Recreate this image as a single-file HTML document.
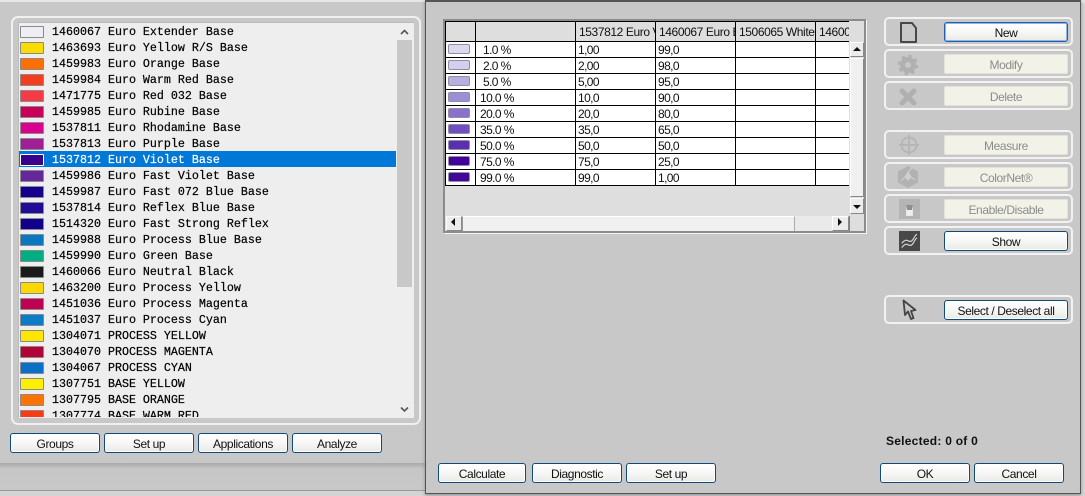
<!DOCTYPE html>
<html><head><meta charset="utf-8"><style>
html,body{margin:0;padding:0;width:1085px;height:496px;overflow:hidden;background:#d4d4d4}
body{position:relative;font-family:"Liberation Sans",sans-serif;font-size:12px;color:#111}
div,svg,span{position:absolute;box-sizing:border-box}
.r{left:19px;width:377px;height:16px;font:11.67px/18px "Liberation Mono",monospace;color:#000;white-space:pre;-webkit-text-stroke:.2px #000}
.r span{left:33px;top:0}
.r i{position:absolute;left:1px;top:3px;width:22px;height:10px;border:1px solid #8a8a8a;border-radius:1px}
.btn{height:20px;border:1px solid #0f4a7c;border-radius:3px;background:linear-gradient(#fff,#f8f8f8 45%,#e9e9e4);text-align:center;line-height:20px;color:#111;font-size:12px;letter-spacing:-.4px;white-space:nowrap;box-shadow:inset 0 0 0 1px #fff}
.dis{border:1px solid #e2e2d8;border-radius:2px;background:#f2f2e8;color:#8c8c8c;box-shadow:none}
.grp{left:884px;width:189px;height:29px;border:2px solid #f2f2f2;border-radius:5px}
.c{font-size:12px;line-height:18px;white-space:nowrap;color:#111;letter-spacing:-.6px}
.hl{left:446px;width:403px;height:1px;background:#000}
.vl{top:22px;width:1px;height:164px;background:#000}
.sw{left:448px;width:22px;height:10px;border:1px solid #8f8f9f;border-radius:2px}
.h{top:24px;height:17px;line-height:17px;overflow:hidden;white-space:nowrap;font-size:12px;color:#111;letter-spacing:-.4px}
.sb{background:#ececec;border-top:1px solid #fff;border-left:1px solid #fff;border-right:1px solid #888;border-bottom:1px solid #888}
</style></head><body>

<div style="left:0;top:0;width:1085px;height:3px;background:#e6e6e6"></div>
<div style="left:0;top:463px;width:425px;height:27px;background:linear-gradient(#a9a9a9,#c6c6c6 6px,#c8c8c8)"></div>
<div style="left:0;top:490px;width:425px;height:1px;background:#9a9a9a"></div>
<div style="left:0;top:2px;width:425px;height:461px;background:#c8c8c8"></div>

<div style="left:11px;top:16px;width:410px;height:409px;border:2px solid #f0f0f0;border-radius:7px"></div>
<div style="left:18px;top:22px;width:396px;height:396px;background:#eeeeee;border-top:1px solid #bbb;border-left:1px solid #bbb"></div>

<div class="r" style="top:23px"><i style="background:#eeeef4"></i><span>1460067 Euro Extender Base</span></div>
<div class="r" style="top:39px"><i style="background:#fbdc00"></i><span>1463693 Euro Yellow R/S Base</span></div>
<div class="r" style="top:55px"><i style="background:#ff6e00"></i><span>1459983 Euro Orange Base</span></div>
<div class="r" style="top:71px"><i style="background:#f43e1e"></i><span>1459984 Euro Warm Red Base</span></div>
<div class="r" style="top:87px"><i style="background:#f83a44"></i><span>1471775 Euro Red 032 Base</span></div>
<div class="r" style="top:103px"><i style="background:#c80058"></i><span>1459985 Euro Rubine Base</span></div>
<div class="r" style="top:119px"><i style="background:#dc0090"></i><span>1537811 Euro Rhodamine Base</span></div>
<div class="r" style="top:135px"><i style="background:#a01e96"></i><span>1537813 Euro Purple Base</span></div>
<div class="r" style="top:151px;background:#0078d7;color:#fff;-webkit-text-stroke:.2px #fff"><i style="background:#38008c;border-color:#fff"></i><span>1537812 Euro Violet Base</span></div>
<div class="r" style="top:167px"><i style="background:#64289c"></i><span>1459986 Euro Fast Violet Base</span></div>
<div class="r" style="top:183px"><i style="background:#14008c"></i><span>1459987 Euro Fast 072 Blue Base</span></div>
<div class="r" style="top:199px"><i style="background:#200c98"></i><span>1537814 Euro Reflex Blue Base</span></div>
<div class="r" style="top:215px"><i style="background:#10008c"></i><span>1514320 Euro Fast Strong Reflex</span></div>
<div class="r" style="top:231px"><i style="background:#0a78c0"></i><span>1459988 Euro Process Blue Base</span></div>
<div class="r" style="top:247px"><i style="background:#00ae84"></i><span>1459990 Euro Green Base</span></div>
<div class="r" style="top:263px"><i style="background:#1a1a1a"></i><span>1460066 Euro Neutral Black</span></div>
<div class="r" style="top:279px"><i style="background:#fcd800"></i><span>1463200 Euro Process Yellow</span></div>
<div class="r" style="top:295px"><i style="background:#c00050"></i><span>1451036 Euro Process Magenta</span></div>
<div class="r" style="top:311px"><i style="background:#0a7cc8"></i><span>1451037 Euro Process Cyan</span></div>
<div class="r" style="top:327px"><i style="background:#ffe600"></i><span>1304071 PROCESS YELLOW</span></div>
<div class="r" style="top:343px"><i style="background:#b00434"></i><span>1304070 PROCESS MAGENTA</span></div>
<div class="r" style="top:359px"><i style="background:#0870c8"></i><span>1304067 PROCESS CYAN</span></div>
<div class="r" style="top:375px"><i style="background:#fff000"></i><span>1307751 BASE YELLOW</span></div>
<div class="r" style="top:391px"><i style="background:#ff7400"></i><span>1307795 BASE ORANGE</span></div>
<div style="left:19px;top:407px;width:377px;height:10px;overflow:hidden"><div class="r" style="left:0;top:0"><i style="background:#fc3a14"></i><span>1307774 BASE WARM RED</span></div></div>

<div style="left:397px;top:23px;width:15px;height:394px;background:#eeeeee"></div>
<div style="left:397px;top:40px;width:15px;height:247px;background:#c8c8c8"></div>
<svg style="left:397px;top:23px" width="15" height="394"><path d="M4 11l3.500-3.500 3.500 3.500M4 384.500l3.500 3.500 3.500-3.500" fill="none" stroke="#555" stroke-width="1.600"/></svg>

<div class="btn" style="left:10px;top:433px;width:90px">Groups</div>
<div class="btn" style="left:104px;top:433px;width:90px">Set up</div>
<div class="btn" style="left:198px;top:433px;width:90px">Applications</div>
<div class="btn" style="left:292px;top:433px;width:90px">Analyze</div>

<!-- right window -->
<div style="left:425px;top:0;width:656px;height:494px;background:#c8c8c8;border:1px solid #555;border-top:2px solid #555;box-shadow:0 1px 3px #888"></div>

<!-- table -->
<div style="left:443px;top:19px;width:423px;height:214px;background:#dedede;border:2px solid #8c8c8c;box-shadow:1px 1px 0 #f4f4f4"></div>
<div style="left:445px;top:21px;width:404px;height:1px;background:#000"></div>
<div style="left:446px;top:42px;width:403px;height:144px;background:#fff"></div>
<div class="hl" style="top:41px"></div><div class="hl" style="top:57px"></div><div class="hl" style="top:73px"></div><div class="hl" style="top:89px"></div><div class="hl" style="top:105px"></div><div class="hl" style="top:121px"></div><div class="hl" style="top:137px"></div><div class="hl" style="top:153px"></div><div class="hl" style="top:169px"></div><div class="hl" style="top:185px"></div>
<div class="vl" style="left:445px"></div><div class="vl" style="left:475px"></div><div class="vl" style="left:575px"></div><div class="vl" style="left:655px"></div><div class="vl" style="left:735px"></div><div class="vl" style="left:815px"></div>

<div class="h" style="left:579px;width:76px">1537812 Euro V</div>
<div class="h" style="left:659px;width:76px">1460067 Euro E</div>
<div class="h" style="left:739px;width:76px">1506065 White</div>
<div class="h" style="left:819px;width:30px">14600</div>

<div class="sw" style="top:44px;background:#dcd8f0"></div>
<div class="sw" style="top:60px;background:#d4cfec"></div>
<div class="sw" style="top:76px;background:#b8aee0"></div>
<div class="sw" style="top:92px;background:#9c8ed8"></div>
<div class="sw" style="top:108px;background:#8a72cc"></div>
<div class="sw" style="top:124px;background:#7050c0"></div>
<div class="sw" style="top:140px;background:#5a30b0"></div>
<div class="sw" style="top:156px;background:#44009c"></div>
<div class="sw" style="top:172px;background:#420898"></div>

<div class="c" style="left:483px;top:41px">1.0 %</div><div class="c" style="left:578px;top:41px">1,00</div><div class="c" style="left:658px;top:41px">99,0</div>
<div class="c" style="left:483px;top:57px">2.0 %</div><div class="c" style="left:578px;top:57px">2,00</div><div class="c" style="left:658px;top:57px">98,0</div>
<div class="c" style="left:483px;top:73px">5.0 %</div><div class="c" style="left:578px;top:73px">5,00</div><div class="c" style="left:658px;top:73px">95,0</div>
<div class="c" style="left:480px;top:89px">10.0 %</div><div class="c" style="left:578px;top:89px">10,0</div><div class="c" style="left:658px;top:89px">90,0</div>
<div class="c" style="left:480px;top:105px">20.0 %</div><div class="c" style="left:578px;top:105px">20,0</div><div class="c" style="left:658px;top:105px">80,0</div>
<div class="c" style="left:480px;top:121px">35.0 %</div><div class="c" style="left:578px;top:121px">35,0</div><div class="c" style="left:658px;top:121px">65,0</div>
<div class="c" style="left:480px;top:137px">50.0 %</div><div class="c" style="left:578px;top:137px">50,0</div><div class="c" style="left:658px;top:137px">50,0</div>
<div class="c" style="left:480px;top:153px">75.0 %</div><div class="c" style="left:578px;top:153px">75,0</div><div class="c" style="left:658px;top:153px">25,0</div>
<div class="c" style="left:480px;top:169px">99.0 %</div><div class="c" style="left:578px;top:169px">99,0</div><div class="c" style="left:658px;top:169px">1,00</div>

<!-- scrollbars -->
<div class="sb" style="left:850px;top:42px;width:14px;height:15px"></div>
<div class="sb" style="left:850px;top:58px;width:14px;height:139px;background:#f0f0f0"></div>
<div class="sb" style="left:850px;top:198px;width:14px;height:16px"></div>
<div class="sb" style="left:446px;top:216px;width:16px;height:15px"></div>
<div style="left:462px;top:216px;width:333px;height:15px;background:#f0f0f0;border-top:1px solid #fff;border-left:1px solid #999;border-right:1px solid #aaa"></div>
<div style="left:795px;top:216px;width:37px;height:15px;background:#eaeaea"></div>
<div class="sb" style="left:832px;top:216px;width:17px;height:15px"></div>
<div style="left:849px;top:216px;width:1px;height:15px;background:#808080"></div>
<svg style="left:443px;top:19px" width="423" height="214"><path d="M410 32h8l-4-4zM410 186h8l-4 4zM12 199v8l-4-4zM395 199v8l4-4z" fill="#111"/></svg>

<!-- right groups -->
<div class="grp" style="top:17px"></div>
<div class="grp" style="top:49px"></div>
<div class="grp" style="top:81px"></div>
<div class="grp" style="top:130px"></div>
<div class="grp" style="top:162px"></div>
<div class="grp" style="top:194px"></div>
<div class="grp" style="top:226px"></div>
<div class="grp" style="top:295px"></div>

<div class="btn" style="left:944px;top:22px;width:124px;border-color:#1f5fb0;box-shadow:inset 0 0 0 1px #8fb4e8">New</div>
<div class="btn dis" style="left:944px;top:54px;width:124px">Modify</div>
<div class="btn dis" style="left:944px;top:86px;width:124px">Delete</div>
<div class="btn dis" style="left:944px;top:135px;width:124px">Measure</div>
<div class="btn dis" style="left:944px;top:167px;width:124px">ColorNet®</div>
<div class="btn dis" style="left:944px;top:199px;width:124px">Enable/Disable</div>
<div class="btn" style="left:944px;top:231px;width:124px">Show</div>
<div class="btn" style="left:944px;top:300px;width:124px">Select / Deselect all</div>

<!-- icons -->
<svg style="left:895px;top:18px" width="30" height="28"><path d="M6 5h11l4 5v14h-15z" fill="none" stroke="#484848" stroke-width="2" stroke-linejoin="round"/></svg>
<svg style="left:895px;top:50px" width="28" height="28"><circle cx="13" cy="15" r="5.500" fill="none" stroke="#b0b0b0" stroke-width="5"/><circle cx="13" cy="15" r="8.500" fill="none" stroke="#b0b0b0" stroke-width="3.500" stroke-dasharray="3.300 3.375"/></svg>
<svg style="left:895px;top:82px" width="28" height="28"><path d="M7 9l12 12M19 9L7 21" stroke="#b0b0b0" stroke-width="5" stroke-linecap="round"/></svg>
<svg style="left:895px;top:131px" width="28" height="28"><circle cx="14" cy="14" r="7.500" fill="none" stroke="#b6b6b6" stroke-width="2"/><path d="M14 4v20M4 14h20" stroke="#b6b6b6" stroke-width="2"/></svg>
<svg style="left:895px;top:163px" width="28" height="28"><path d="M13 3l10 5.500v11L13 25 3 19.500v-11z" fill="#b2b2b2"/><path d="M13 9l-3 5 3 3 3-3zM17 5l-4 4M6 18l4-4M20 17l-4-3" fill="#d0d0d0" stroke="#d0d0d0"/></svg>
<div style="left:899px;top:199px;width:21px;height:20px;background:#b4b4b4"></div>
<div style="left:906px;top:205px;width:7px;height:11px;background:#eee;border:1px solid #e8e8e8;border-top:5px solid #8e8e8e"></div>
<div style="left:899px;top:231px;width:21px;height:20px;background:#484848"></div>
<svg style="left:899px;top:231px" width="21" height="20"><path d="M2.700 12.300C5 9.500 7 8.800 8.500 9.500S12 11.500 14 8.500 16 4 18 3.300M2.700 16.700C5 13.500 7 12.800 8.500 13.500S12 15.500 14 12.500 16 8 18 6.700" fill="none" stroke="#d0d0d0" stroke-width="1.200"/></svg>
<svg style="left:895px;top:297px" width="28" height="28"><path d="M8.500 3.500L10 18l3-3.500 3 7.500 2.500-1-2.500-7 4.500-1z" fill="#c8c8c8" stroke="#444" stroke-width="1.800" stroke-linejoin="round"/></svg>

<div style="left:886px;top:433px;font-weight:bold;font-size:12px;line-height:16px;color:#111;white-space:nowrap;letter-spacing:.25px">Selected: 0 of 0</div>

<div class="btn" style="left:438px;top:463px;width:88px">Calculate</div>
<div class="btn" style="left:532px;top:463px;width:90px">Diagnostic</div>
<div class="btn" style="left:626px;top:463px;width:90px">Set up</div>
<div class="btn" style="left:880px;top:463px;width:90px">OK</div>
<div class="btn" style="left:974px;top:463px;width:90px">Cancel</div>
</body></html>
